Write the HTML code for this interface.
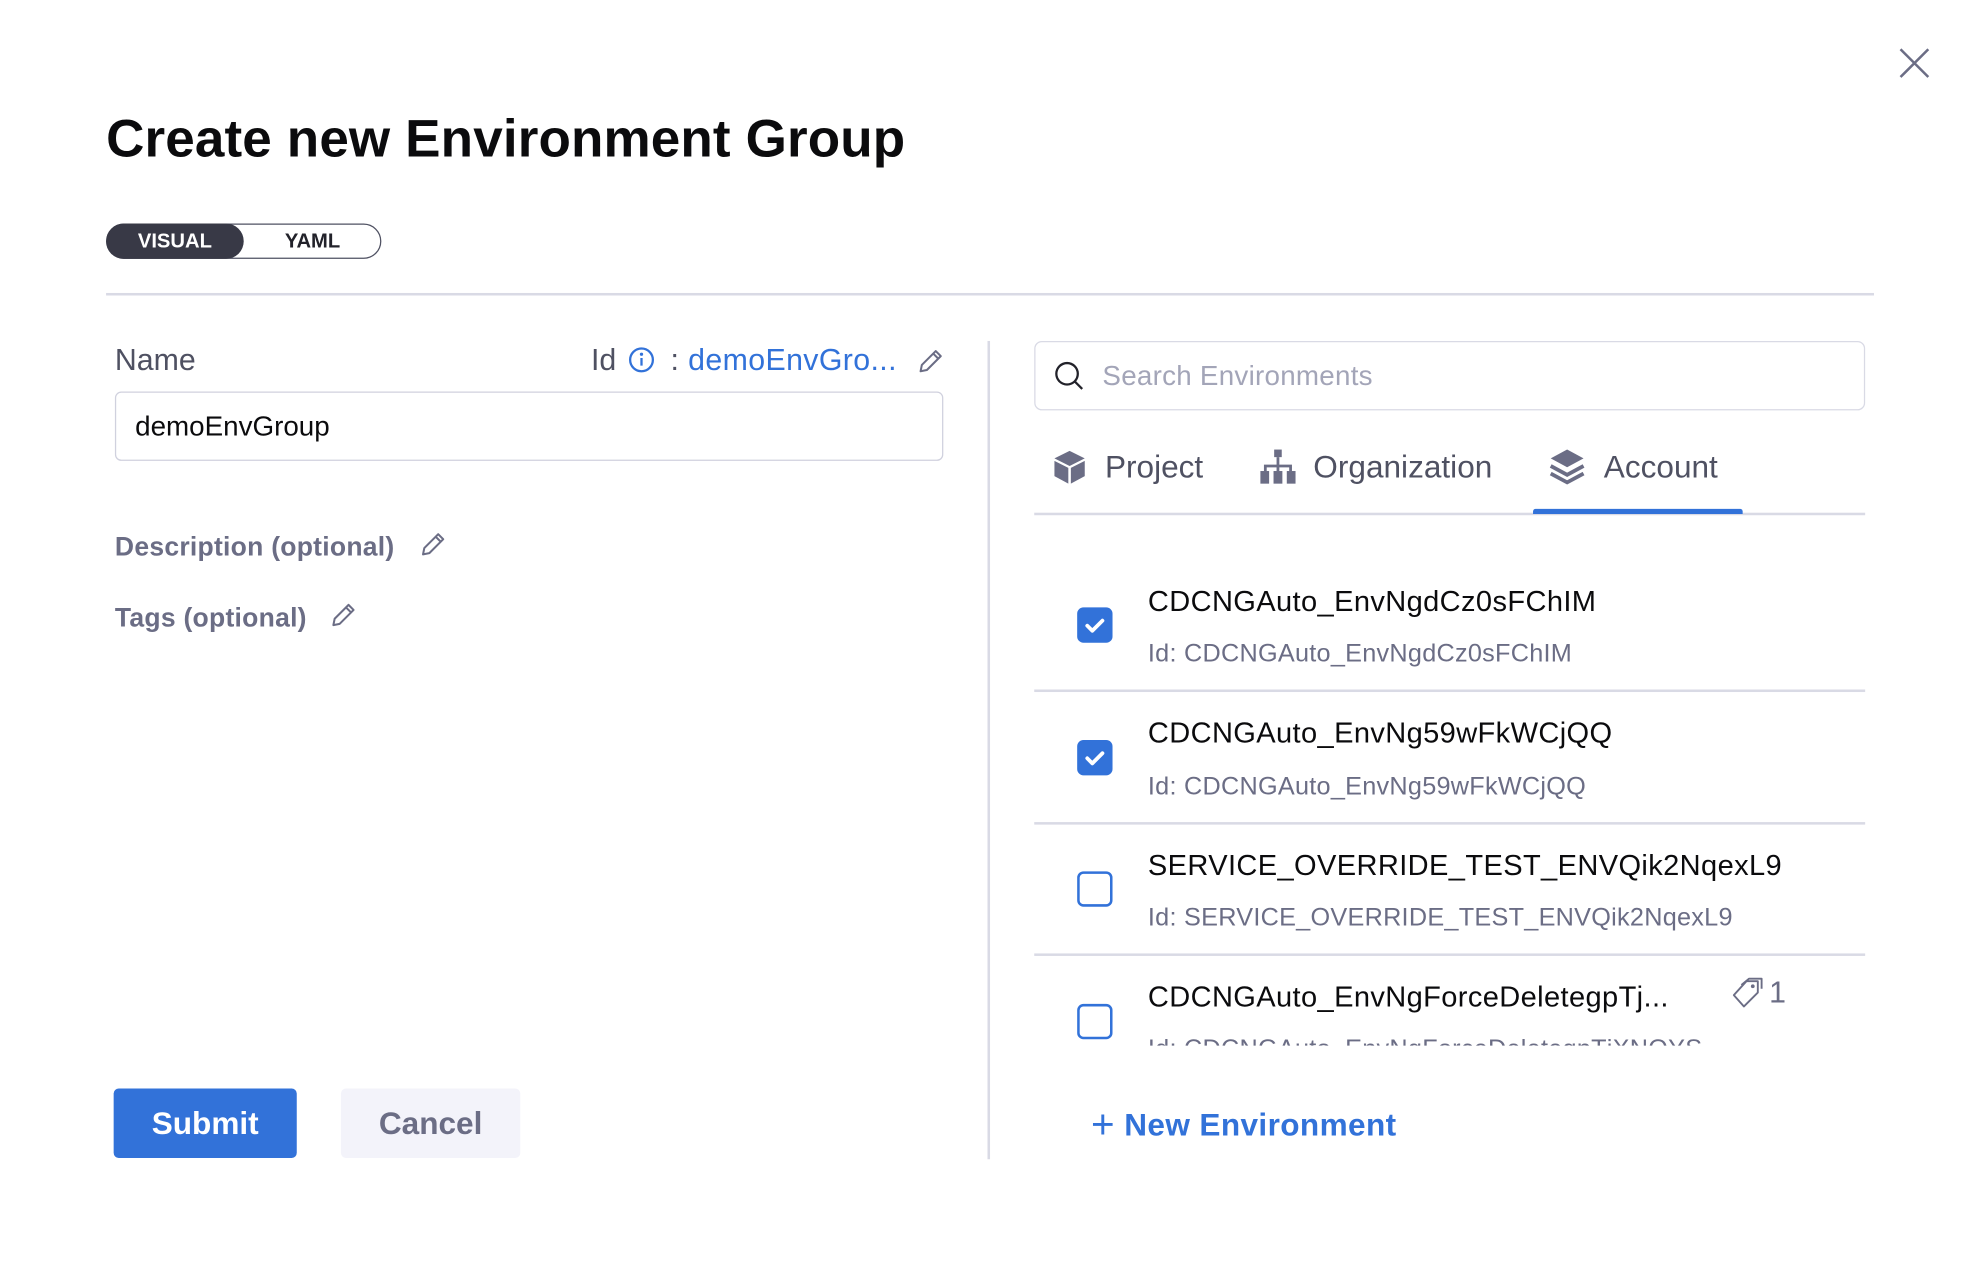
<!DOCTYPE html>
<html><head><meta charset="utf-8"><style>
html,body{margin:0;padding:0;width:1980px;height:1264px;overflow:hidden;background:#fff}
#w{position:absolute;left:0;top:0;width:1568px;height:1001px;transform:scale(1.2628);transform-origin:0 0;font-family:"Liberation Sans",Arial,sans-serif;}
.a{position:absolute;white-space:nowrap}
.cb{position:absolute;left:853px;width:28px;height:28px;border-radius:5px;box-sizing:border-box}
.on{background:#3272d9}
.off{border:2px solid #3272d9;background:#fff}
.t{position:absolute;left:909px;font-size:23px;color:#0b0b0d;line-height:28px;letter-spacing:0.3px}
.i{position:absolute;left:909px;font-size:20px;color:#6b6d85;line-height:24px;letter-spacing:0.2px}
.sep{position:absolute;left:819px;width:658px;height:2px;background:#d9dae5}
</style></head><body><div id="w">
<svg class="a" style="left:1503px;top:37px" width="26" height="26" viewBox="0 0 26 26"><path d="M2 2L24 24M24 2L2 24" stroke="#6b6d85" stroke-width="2"/></svg>
<div class="a" style="left:84px;top:86px;font-size:42px;font-weight:bold;color:#0b0b0d;letter-spacing:0.1px">Create new Environment Group</div>
<div class="a" style="left:84px;top:177px;width:218px;height:28px;border:1.5px solid #4f5162;border-radius:15px;box-sizing:border-box"></div>
<div class="a" style="left:84px;top:177px;width:109px;height:28px;background:#383946;border-radius:15px;color:#fff;font-weight:bold;font-size:16px;line-height:29px;text-align:center">VISUAL</div>
<div class="a" style="left:193px;top:177px;width:109px;height:28px;color:#22222a;font-weight:bold;font-size:16px;line-height:29px;text-align:center">YAML</div>
<div class="a" style="left:84px;top:232px;width:1400px;height:2px;background:#d9dae5"></div>
<div class="a" style="left:782px;top:270px;width:2px;height:648px;background:#d9dae5"></div>

<div class="a" style="left:91px;top:272px;font-size:24px;color:#4f5162">Name</div>
<div class="a" style="left:468px;top:272px;font-size:24px;color:#4f5162">Id</div>
<svg class="a" style="left:497px;top:274px" width="22" height="22" viewBox="0 0 22 22"><circle cx="11" cy="11" r="9" fill="none" stroke="#3272d9" stroke-width="1.8"/><circle cx="11" cy="6.5" r="1.3" fill="#3272d9"/><path d="M11 9.5v6" stroke="#3272d9" stroke-width="1.8"/></svg>
<div class="a" style="left:531px;top:272px;font-size:24px;color:#3272d9;letter-spacing:0.3px"><span style="color:#4f5162">:</span> demoEnvGro...</div>
<svg class="a" style="left:725px;top:274px" width="24" height="24" viewBox="0 0 24 24"><path d="M4 20l1-5L16 4l4 4L9 19z M14 6l4 4" fill="none" stroke="#6b6d85" stroke-width="1.6" stroke-linejoin="round"/></svg>
<div class="a" style="left:91px;top:310px;width:656px;height:55px;border:1.5px solid #d0d1de;border-radius:5px;box-sizing:border-box"></div>
<div class="a" style="left:107px;top:325px;font-size:22px;color:#0b0b0d">demoEnvGroup</div>
<div class="a" style="left:91px;top:422px;font-size:21px;font-weight:bold;color:#6b6d85;letter-spacing:0.2px">Description (optional)</div>
<svg class="a" style="left:331px;top:419px" width="24" height="24" viewBox="0 0 24 24"><path d="M4 20l1-5L16 4l4 4L9 19z M14 6l4 4" fill="none" stroke="#6b6d85" stroke-width="1.6" stroke-linejoin="round"/></svg>
<div class="a" style="left:91px;top:478px;font-size:21px;font-weight:bold;color:#6b6d85;letter-spacing:0.2px">Tags (optional)</div>
<svg class="a" style="left:260px;top:475px" width="24" height="24" viewBox="0 0 24 24"><path d="M4 20l1-5L16 4l4 4L9 19z M14 6l4 4" fill="none" stroke="#6b6d85" stroke-width="1.6" stroke-linejoin="round"/></svg>
<div class="a" style="left:90px;top:862px;width:145px;height:55px;background:#3272d9;border-radius:4px;color:#fff;font-weight:bold;font-size:25px;line-height:57px;text-align:center">Submit</div>
<div class="a" style="left:270px;top:862px;width:142px;height:55px;background:#f3f3fa;border-radius:4px;color:#6b6d85;font-weight:bold;font-size:25px;line-height:57px;text-align:center">Cancel</div>

<div class="a" style="left:819px;top:270px;width:658px;height:55px;border:1.5px solid #d9dae5;border-radius:6px;box-sizing:border-box"></div>
<svg class="a" style="left:834px;top:285px" width="26" height="26" viewBox="0 0 26 26"><circle cx="11" cy="11" r="8.5" fill="none" stroke="#22222a" stroke-width="1.8"/><path d="M17 17l6 6" stroke="#22222a" stroke-width="1.8"/></svg>
<div class="a" style="left:873px;top:285px;font-size:22px;color:#a3a5b8;letter-spacing:0.2px">Search Environments</div>

<svg class="a" style="left:834px;top:356px" width="26" height="28" viewBox="0 0 26 28"><path d="M13 1L25 7L13 13L1 7Z" fill="#6b6d85"/><path d="M1 9L12 14.5V27L1 21Z M25 9L14 14.5V27L25 21Z" fill="#6b6d85"/></svg>
<div class="a" style="left:875px;top:356px;font-size:25px;color:#4f5162">Project</div>
<svg class="a" style="left:998px;top:356px" width="28" height="28" viewBox="0 0 28 28"><rect x="11" y="0" width="6" height="6" fill="#6b6d85"/><path d="M14 6v6M4 17v-4h20v4M14 12v5" stroke="#6b6d85" stroke-width="2.2" fill="none"/><rect x="0" y="17" width="7" height="10" fill="#6b6d85"/><rect x="10.5" y="17" width="7" height="10" fill="#6b6d85"/><rect x="21" y="17" width="7" height="10" fill="#6b6d85"/></svg>
<div class="a" style="left:1040px;top:356px;font-size:25px;color:#4f5162">Organization</div>
<svg class="a" style="left:1227px;top:355px" width="28" height="30" viewBox="0 0 28 30"><path d="M14 1L27 8L14 15L1 8Z" fill="#6b6d85"/><path d="M1 14L14 21L27 14M1 20L14 27L27 20" fill="none" stroke="#6b6d85" stroke-width="3"/></svg>
<div class="a" style="left:1270px;top:356px;font-size:25px;color:#4f5162">Account</div>
<div class="a" style="left:819px;top:406px;width:658px;height:2px;background:#d9dae5"></div>
<div class="a" style="left:1214px;top:403px;width:166px;height:4px;background:#3272d9;border-radius:2px 2px 0 0"></div>

<div style="position:absolute;left:0;top:0;width:1568px;height:828px;overflow:hidden">
<div class="cb on" style="top:481px"><svg width="28" height="28" viewBox="0 0 28 28"><path d="M8 14.5l4 4 8-8" fill="none" stroke="#fff" stroke-width="3" stroke-linecap="round" stroke-linejoin="round"/></svg></div>
<div class="t" style="top:462px">CDCNGAuto_EnvNgdCz0sFChIM</div>
<div class="i" style="top:506px">Id: CDCNGAuto_EnvNgdCz0sFChIM</div>
<div class="sep" style="top:546px"></div>
<div class="cb on" style="top:586px"><svg width="28" height="28" viewBox="0 0 28 28"><path d="M8 14.5l4 4 8-8" fill="none" stroke="#fff" stroke-width="3" stroke-linecap="round" stroke-linejoin="round"/></svg></div>
<div class="t" style="top:566px">CDCNGAuto_EnvNg59wFkWCjQQ</div>
<div class="i" style="top:611px">Id: CDCNGAuto_EnvNg59wFkWCjQQ</div>
<div class="sep" style="top:651px"></div>
<div class="cb off" style="top:690px"></div>
<div class="t" style="top:671px">SERVICE_OVERRIDE_TEST_ENVQik2NqexL9</div>
<div class="i" style="top:715px">Id: SERVICE_OVERRIDE_TEST_ENVQik2NqexL9</div>
<div class="sep" style="top:755px"></div>
<div class="cb off" style="top:795px"></div>
<div class="t" style="top:775px">CDCNGAuto_EnvNgForceDeletegpTj...</div>
<svg class="a" style="left:1370px;top:773px" width="28" height="28" viewBox="0 0 28 28"><path d="M3 15L13 4H22V13L11 24Z M9 7L15 2H25V10" fill="none" stroke="#6b6d85" stroke-width="1.5" stroke-linejoin="round"/><circle cx="18" cy="8" r="1.5" fill="#6b6d85"/></svg>
<div class="a" style="left:1401px;top:773px;font-size:24px;color:#6b6d85">1</div>
<div class="i" style="top:819px">Id: CDCNGAuto_EnvNgForceDeletegpTjXNQYS</div>
</div>

<div class="a" style="left:864px;top:870px;font-size:25px;font-weight:bold;color:#3272d9;letter-spacing:0.3px"><span style="font-weight:normal;font-size:32px;position:relative;top:2px">+</span> New Environment</div>
</div></body></html>
